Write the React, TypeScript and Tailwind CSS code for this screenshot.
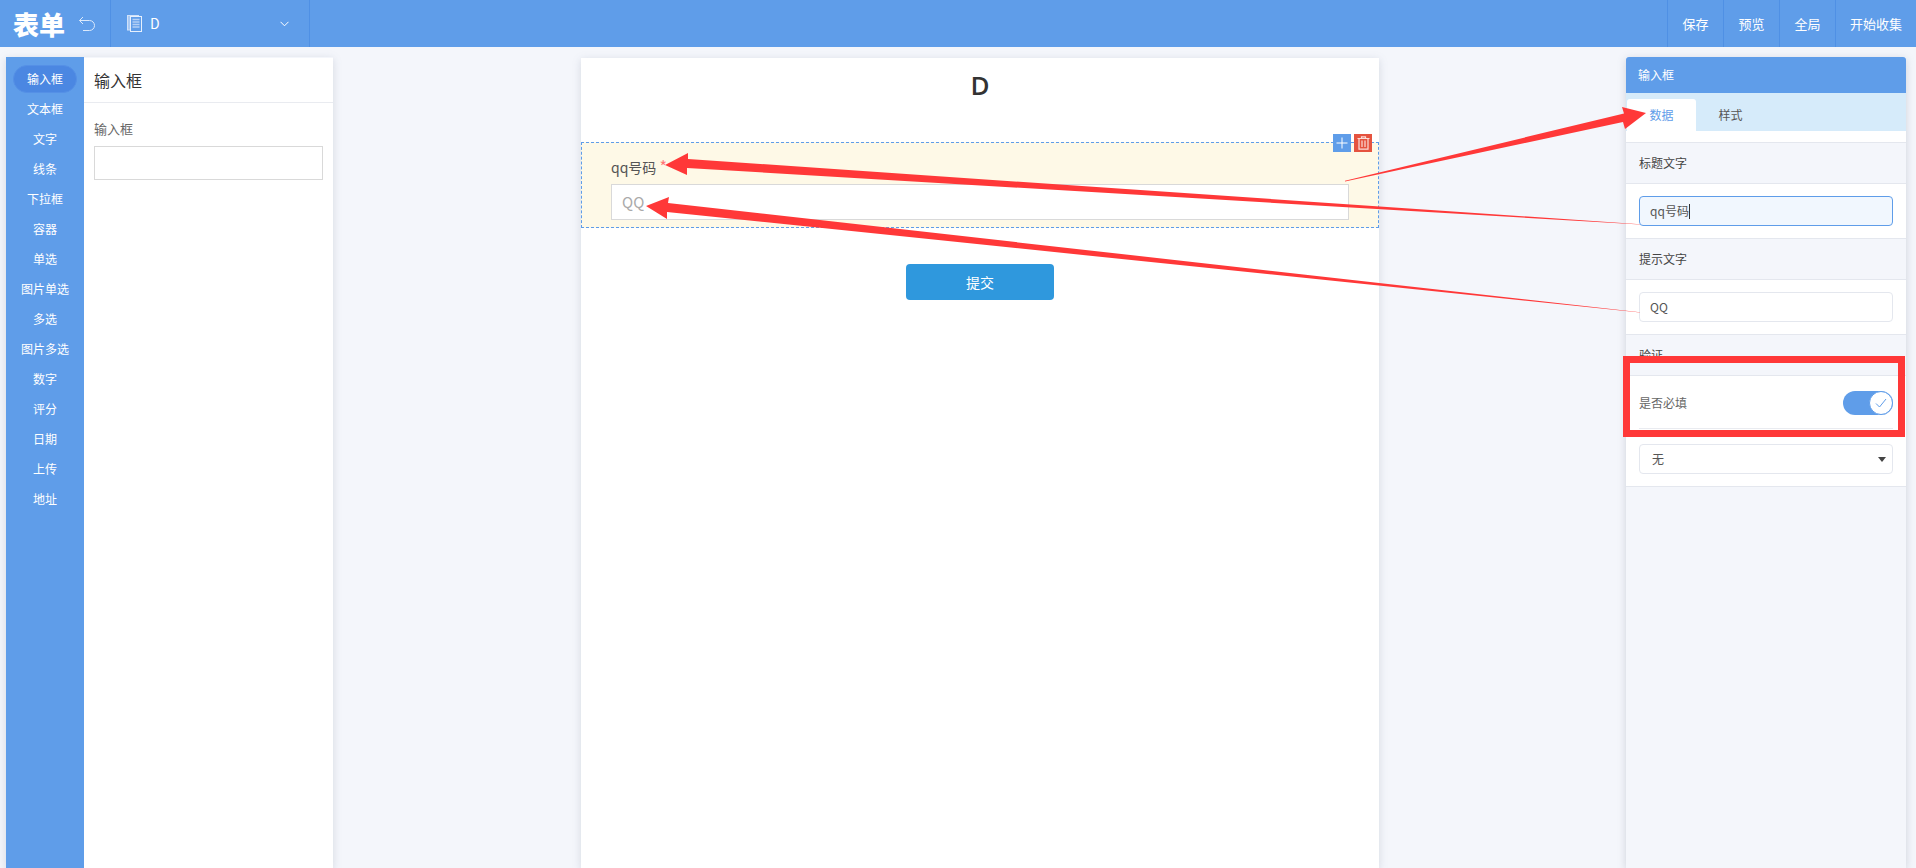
const font = "font-['Microsoft_YaHei','Noto_Sans_CJK_SC',sans-serif]";

const items = ['输入框','文本框','文字','线条','下拉框','容器','单选','图片单选','多选','图片多选','数字','评分','日期','上传','地址'];

function SectionTitle({ children }: { children: React.ReactNode }) {
  return <div className="h-[41px] flex items-center pl-[13px] text-[12px] text-[#444] border-b border-[#e4e7ee]">{children}</div>;
}

export default function App() {
  return (
    <div className={`relative w-[1916px] h-[868px] overflow-hidden bg-[#f4f6fb] ${font}`}>
      <header className="h-[47px] bg-[#5f9de9] flex text-white">
        <div className="w-[111px] flex items-center border-r border-[#4f90e4]">
          <span className="ml-[13px] text-[26px] leading-none font-black tracking-[0px]">表单</span>
          <svg className="ml-[13px]" width="18" height="16" viewBox="0 0 18 16" fill="none" stroke="#dbe9fb" strokeWidth="1">
            <path d="M5 1 L1.5 4.5 L5 8" />
            <path d="M1.5 4.5 H11.5 A4.5 4.5 0 0 1 11.5 14.5 H5" />
          </svg>
        </div>
        <div className="w-[199px] flex items-center border-r border-[#4f90e4] pl-[16px] text-[14px]">
          <svg width="15" height="17" viewBox="0 0 15 17" fill="none">
            <rect x="0.5" y="0.5" width="11" height="14.5" fill="#a9c9f3" stroke="#cfe1f9" />
            <rect x="3.5" y="1.5" width="11" height="15" fill="#5f9de9" stroke="#e6f0fd" />
            <path d="M5.5 4.5 H12.5 M5.5 7 H12.5 M5.5 9.5 H12.5 M5.5 12 H12.5" stroke="#b4d0f5" strokeWidth="1.4" />
          </svg>
          <span className="ml-[8px]">D</span>
          <svg className="ml-[120px]" width="9" height="6" viewBox="0 0 9 6" fill="none" stroke="#ffffff" strokeWidth="1">
            <path d="M0.5 0.8 L4.5 4.8 L8.5 0.8" />
          </svg>
        </div>
        <div className="ml-auto flex text-[13px]">
          <div className="w-[56px] flex items-center justify-center border-l border-[#4f90e4]">保存</div>
          <div className="w-[56px] flex items-center justify-center border-l border-[#4f90e4]">预览</div>
          <div className="w-[56px] flex items-center justify-center border-l border-[#4f90e4]">全局</div>
          <div className="w-[81px] flex items-center justify-center border-l border-[#4f90e4]">开始收集</div>
        </div>
      </header>

      <main className="flex pl-[6px] pt-[10px] h-[821px]">
        <aside className="w-[327px] flex shadow-[0_2px_8px_rgba(120,130,150,0.25)]">
          <nav className="w-[78px] bg-[#5f9de9] pt-[8px] text-[12px] text-white">
            {items.map((t, i) =>
              i === 0 ? (
                <div key={t} className="h-[29px] flex justify-center items-start">
                  <span className="w-[64px] h-[28px] rounded-[14px] bg-[#4b87e2] border border-[#5590e6] flex items-center justify-center">{t}</span>
                </div>
              ) : (
                <div key={t} className="h-[30px] flex justify-center items-center">{t}</div>
              )
            )}
          </nav>
          <div className="flex-1 bg-white mt-[1px]">
            <div className="h-[45px] flex items-center pl-[10px] text-[16px] text-[#333] border-b border-[#e9ebf0]">输入框</div>
            <div className="pl-[10px] pr-[10px]">
              <div className="mt-[16px] text-[13px] text-[#666] leading-[20px]">输入框</div>
              <div className="mt-[7px] h-[34px] border border-[#d9d9d9]"></div>
            </div>
          </div>
        </aside>

        <section className="ml-[248px] w-[798px] bg-white mt-[1px] shadow-[0_2px_8px_rgba(120,130,150,0.25)]">
          <h1 className="h-[84px] pt-[9px] text-center text-[26px] leading-[36px] font-semibold text-[#333] font-['Open_Sans',sans-serif]">D</h1>
          <div className="relative h-[86px] bg-[#fef9e7] border border-dashed border-[#5f9de9] px-[29px] pt-[13px]">
            <div className="h-[27px] text-[14px] leading-[20px] text-[#555]">
              qq号码 <span className="text-[16px] text-[#f77]">*</span>
            </div>
            <div className="h-[36px] mt-[1px] bg-white border border-[#d9d9d9] pl-[10px] flex items-center text-[15px] text-[#aaa]">QQ</div>
            <div className="absolute left-[751px] top-[-9px] w-[18px] h-[18px] bg-[#5f9de9] flex items-center justify-center">
              <svg width="12" height="12" viewBox="0 0 12 12" stroke="#fff" strokeWidth="1"><path d="M6 0.5 V11.5 M0.5 6 H11.5" /></svg>
            </div>
            <div className="absolute left-[772px] top-[-9px] w-[18px] h-[18px] bg-[#e5533f] flex items-center justify-center">
              <svg width="13" height="14" viewBox="0 0 13 14" fill="none" stroke="#fbdcd7" strokeWidth="1.2">
                <path d="M0.5 2.5 H12.5 M4.5 2.5 V0.8 H8.5 V2.5" />
                <path d="M2 2.5 V13.2 H11 V2.5" />
                <path d="M5 4.5 V11 M8 4.5 V11" />
              </svg>
            </div>
          </div>
          <div className="flex justify-center mt-[36px]">
            <div className="w-[148px] h-[36px] bg-[#2f98dd] rounded-[4px] flex items-center justify-center text-[14px] text-white">提交</div>
          </div>
        </section>

        <aside className="ml-[247px] w-[280px] shadow-[0_2px_8px_rgba(120,130,150,0.3)] text-[12px]">
          <div className="h-[36px] bg-[#5f9de9] rounded-t-[3px] flex items-center pl-[12px] text-white">输入框</div>
          <div className="h-[38px] bg-[#d6ebfa] pt-[6px] pl-[1px] flex">
            <div className="w-[69px] bg-white rounded-t-[3px] flex items-center justify-center text-[#5f9de9]">数据</div>
            <div className="w-[69px] flex items-center justify-center text-[#555]">样式</div>
          </div>
          <div className="h-[12px] bg-white border-b border-[#e4e7ee]"></div>
          <SectionTitle>标题文字</SectionTitle>
          <div className="h-[55px] bg-white border-b border-[#e4e7ee] px-[13px] pt-[12px]">
            <div className="h-[30px] bg-[#f1f7fe] border border-[#5f9de9] rounded-[4px] flex items-center pl-[10px] text-[#555]">
              qq号码<span className="w-px h-[15px] bg-[#333]"></span>
            </div>
          </div>
          <SectionTitle>提示文字</SectionTitle>
          <div className="h-[55px] bg-white border-b border-[#e4e7ee] px-[13px] pt-[12px]">
            <div className="h-[30px] border border-[#e4e7ee] rounded-[4px] flex items-center pl-[10px] text-[#555]">QQ</div>
          </div>
          <SectionTitle>验证</SectionTitle>
          <div className="bg-white border-b border-[#e4e7ee] px-[13px] pb-[12px]">
            <div className="h-[53px] pt-[2px] border-b border-[#e9ebf0] flex items-center justify-between text-[#666]">
              是否必填
              <div className="relative w-[50px] h-[24px] rounded-full bg-[#5f9de9]">
                <div className="absolute right-0 top-0 w-[24px] h-[24px] rounded-full bg-white border border-[#5f9de9] flex items-center justify-center">
                  <svg width="12" height="10" viewBox="0 0 12 10" fill="none" stroke="#5f9de9"><path d="M1 5.5 L4.5 9 L11 1" /></svg>
                </div>
              </div>
            </div>
            <div className="mt-[15px] h-[30px] border border-[#e4e7ee] rounded-[4px] flex items-center justify-between pl-[12px] pr-[6px] text-[#555]">
              无
              <span className="w-0 h-0 border-x-[4px] border-x-transparent border-t-[5px] border-t-[#444]"></span>
            </div>
          </div>
        </aside>
      </main>

      <svg className="absolute left-0 top-0 pointer-events-none" width="1916" height="868" viewBox="0 0 1916 868">
        <polygon fill="#ff3838" points="1345,180.8 1624,113.5 1622,107 1646,113 1625,129 1623,122 1345,181.4" />
        <polygon fill="#ff3838" points="1640,224.3 688,159 688,153 665,165 687,175 687,168 1640,224.6" />
        <polygon fill="#ff3838" points="1640,312.3 668,203 669,197 646,206 667,219 667,212 1640,312.6" />
        <rect x="1626.5" y="359.5" width="275" height="74" fill="none" stroke="#ff3838" strokeWidth="7" />
      </svg>
    </div>
  );
}
